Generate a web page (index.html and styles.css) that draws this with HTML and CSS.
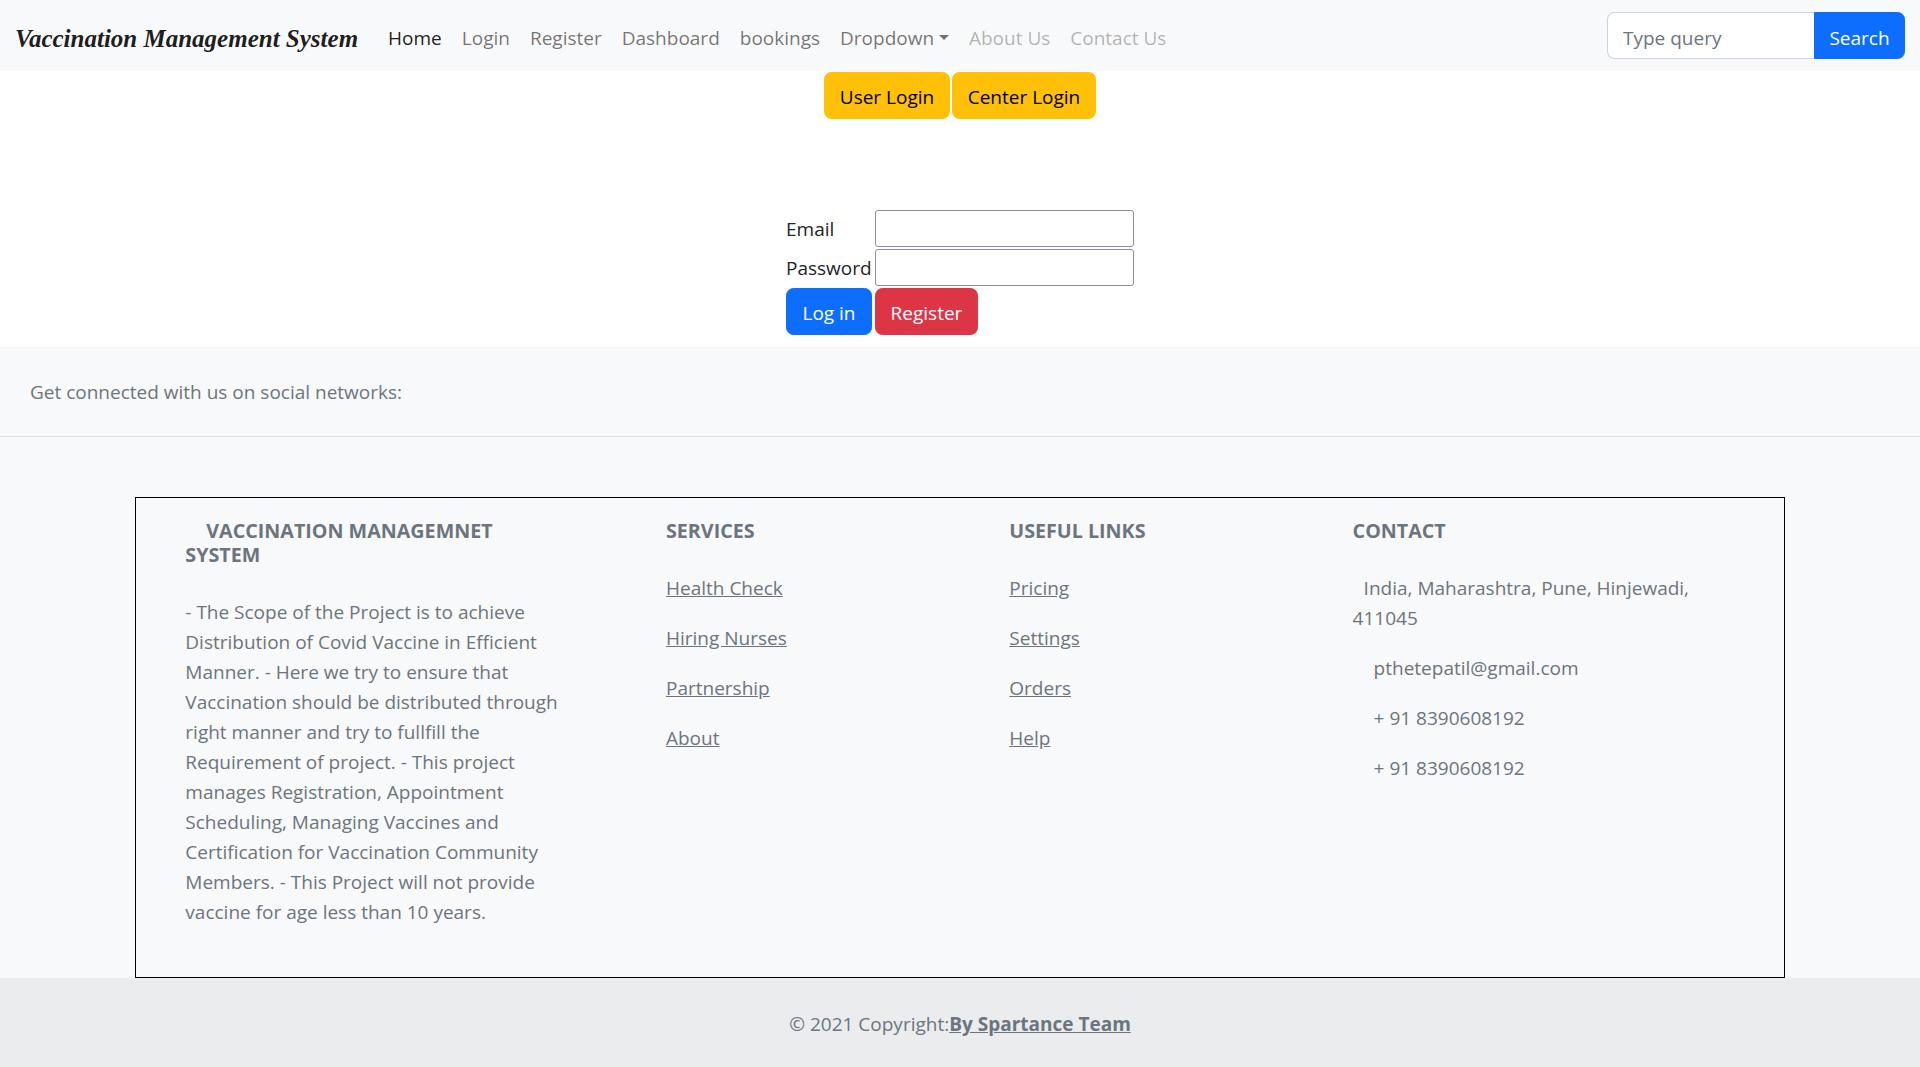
FILE: index.html
```html
<!DOCTYPE html>
<html lang="en">
<head>
<meta charset="utf-8">
<title>Vaccination Management System</title>
<link rel="stylesheet" href="styles.css">
</head>
<body>
<nav class="navbar">
  <a class="brand" href="#">Vaccination Management System</a>
  <ul class="nav">
    <li><a class="nav-link active" href="#">Home</a></li>
    <li><a class="nav-link" href="#">Login</a></li>
    <li><a class="nav-link" href="#">Register</a></li>
    <li><a class="nav-link" href="#">Dashboard</a></li>
    <li><a class="nav-link" href="#">bookings</a></li>
    <li><a class="nav-link" href="#">Dropdown<span class="caret"></span></a></li>
    <li><a class="nav-link disabled" href="#">About Us</a></li>
    <li><a class="nav-link disabled" href="#">Contact Us</a></li>
  </ul>
  <form class="search">
    <input class="search-input" type="search" placeholder="Type query">
    <button class="btn btn-primary search-btn" type="button">Search</button>
  </form>
</nav>

<main class="main">
  <div class="login-switch">
    <button class="btn btn-warning switch-user" type="button">User Login</button>
    <button class="btn btn-warning switch-center" type="button">Center Login</button>
  </div>
  <table class="login-form">
    <tr>
      <td class="label-cell">Email</td>
      <td><input class="field" type="email"></td>
    </tr>
    <tr>
      <td class="label-cell">Password</td>
      <td><input class="field" type="password"></td>
    </tr>
    <tr>
      <td class="label-cell"><button class="btn btn-primary btn-login" type="button">Log in</button></td>
      <td><button class="btn btn-danger btn-register" type="button">Register</button></td>
    </tr>
  </table>
</main>

<footer class="footer">
  <section class="social">
    <span>Get connected with us on social networks:</span>
  </section>
  <section class="container">
    <div class="row">
      <div class="col col-3">
        <h6 class="heading heading-indent">VACCINATION MANAGEMNET SYSTEM</h6>
        <p>- The Scope of the Project is to achieve Distribution of Covid Vaccine in Efficient Manner. - Here we try to ensure that Vaccination should be distributed through right manner and try to fullfill the Requirement of project. - This project manages Registration, Appointment Scheduling, Managing Vaccines and Certification for Vaccination Community Members. - This Project will not provide vaccine for age less than 10 years.</p>
      </div>
      <div class="col col-2">
        <h6 class="heading">SERVICES</h6>
        <p><a href="#" class="link">Health Check</a></p>
        <p><a href="#" class="link">Hiring Nurses</a></p>
        <p><a href="#" class="link">Partnership</a></p>
        <p><a href="#" class="link">About</a></p>
      </div>
      <div class="col col-2">
        <h6 class="heading">USEFUL LINKS</h6>
        <p><a href="#" class="link">Pricing</a></p>
        <p><a href="#" class="link">Settings</a></p>
        <p><a href="#" class="link">Orders</a></p>
        <p><a href="#" class="link">Help</a></p>
      </div>
      <div class="col col-3">
        <h6 class="heading">CONTACT</h6>
        <p class="indent-sm">India, Maharashtra, Pune, Hinjewadi, 411045</p>
        <p class="indent-md">pthetepatil@gmail.com</p>
        <p class="indent-md">+ 91 8390608192</p>
        <p class="indent-md">+ 91 8390608192</p>
      </div>
    </div>
  </section>
  <div class="copyright">
    © 2021 Copyright:<a class="copyright-link" href="#">By Spartance Team</a>
  </div>
</footer>
</body>
</html>
```

FILE: styles.css
```css
* {
  box-sizing: border-box;
}

html,
body {
  margin: 0;
  padding: 0;
}

body {
  font-family: "Open Sans", "Noto Sans", sans-serif;
  font-size: 19px;
  line-height: 30px;
  color: #212529;
  background: #fff;
}

/* ---------- navbar ---------- */
.navbar {
  display: flex;
  align-items: center;
  height: 71px;
  padding: 0 15px;
  background: #f8f9fa;
}

.brand {
  font-family: "Liberation Serif", "Times New Roman", serif;
  font-weight: 700;
  font-style: italic;
  font-size: 25px;
  line-height: 37px;
  padding-top: 5px;
  margin-right: 20px;
  color: rgba(0, 0, 0, 0.9);
  text-decoration: none;
}

.nav {
  display: flex;
  list-style: none;
  margin: 0;
  padding: 0;
}

.nav-link {
  display: block;
  padding: 12px 10px 8px;
  color: rgba(0, 0, 0, 0.55);
  text-decoration: none;
}

.nav-link.active {
  color: rgba(0, 0, 0, 0.9);
}

.nav-link.disabled {
  color: rgba(0, 0, 0, 0.3);
}

.caret {
  display: inline-block;
  margin-left: 0.255em;
  vertical-align: 0.255em;
  border-top: 0.3em solid;
  border-left: 0.3em solid transparent;
  border-right: 0.3em solid transparent;
}

.search {
  display: flex;
  margin: 0 0 0 auto;
}

.search-input {
  width: 207px;
  height: 47px;
  padding: 9px 15px 5px;
  font: inherit;
  color: #212529;
  background: #fff;
  border: 1px solid #ced4da;
  border-right: 0;
  border-radius: 7.5px 0 0 7.5px;
  outline: none;
}

.search-input::placeholder {
  color: #6c757d;
}

/* ---------- buttons ---------- */
.btn {
  font: inherit;
  line-height: 30px;
  padding: 8.5px 15px 6.5px;
  border: 1px solid transparent;
  border-radius: 7.5px;
  cursor: pointer;
  text-align: center;
}

.btn-primary {
  background: #0d6efd;
  border-color: #0d6efd;
  color: #fff;
}

.btn-danger {
  background: #dc3545;
  border-color: #dc3545;
  color: #fff;
}

.btn-warning {
  background: #ffc107;
  border-color: #ffc107;
  color: #000;
}

.search-btn {
  width: 91px;
  height: 47px;
  padding: 4px 0 0;
  border-radius: 0 7.5px 7.5px 0;
}

/* ---------- main ---------- */
.main {
  padding: 1px 0 10px;
}

.login-switch {
  display: flex;
  justify-content: center;
  gap: 2px;
}

.switch-user {
  width: 126px;
  padding-left: 0;
  padding-right: 0;
}

.switch-center {
  width: 144px;
  padding-left: 0;
  padding-right: 0;
}

.login-form {
  margin: 90px auto 0;
  border-spacing: 1px 0;
}

.login-form td {
  padding: 1px;
}

.label-cell {
  width: 88px;
  padding-top: 2px;
  color: #212529;
}

.field {
  display: block;
  width: 259px;
  height: 37px;
  border: 1px solid #8f8f9d;
  border-radius: 3px;
  background: #fff;
  font: inherit;
  padding: 0 4px;
}

.btn-login {
  display: block;
  width: 86px;
  padding-left: 0;
  padding-right: 0;
}

.btn-register {
  display: block;
  width: 103px;
  padding-left: 0;
  padding-right: 0;
}

/* ---------- footer ---------- */
.footer {
  background: #f8f9fa;
  color: #6c757d;
}

.social {
  padding: 31px 30px 29px;
  border-bottom: 1px solid #dee2e6;
}

.container {
  width: 1650px;
  margin: 60px auto 0;
  padding: 0 15px;
  border: 1px solid #000;
}

.row {
  display: flex;
  margin: 20px -15px 0;
}

.col {
  padding: 0 15px;
  margin: 0 auto 30px;
}

.col-3 {
  width: 25%;
}

.col-2 {
  width: 16.6667%;
}

.heading {
  font-size: 19.7px;
  font-weight: 700;
  line-height: 24px;
  margin: 0 0 30px;
  padding-top: 1px;
  text-transform: uppercase;
  color: #6c757d;
}

.heading-indent {
  text-indent: 21px;
}

.col p {
  margin: 0 0 20px;
}

.link {
  color: inherit;
  text-decoration: underline;
}

.indent-sm {
  text-indent: 11px;
}

.indent-md {
  text-indent: 21px;
}

.copyright {
  padding: 31px 30px 29px;
  text-align: center;
  background: rgba(0, 0, 0, 0.05);
}

.copyright-link {
  color: inherit;
  font-weight: 700;
  text-decoration: underline;
}
```
